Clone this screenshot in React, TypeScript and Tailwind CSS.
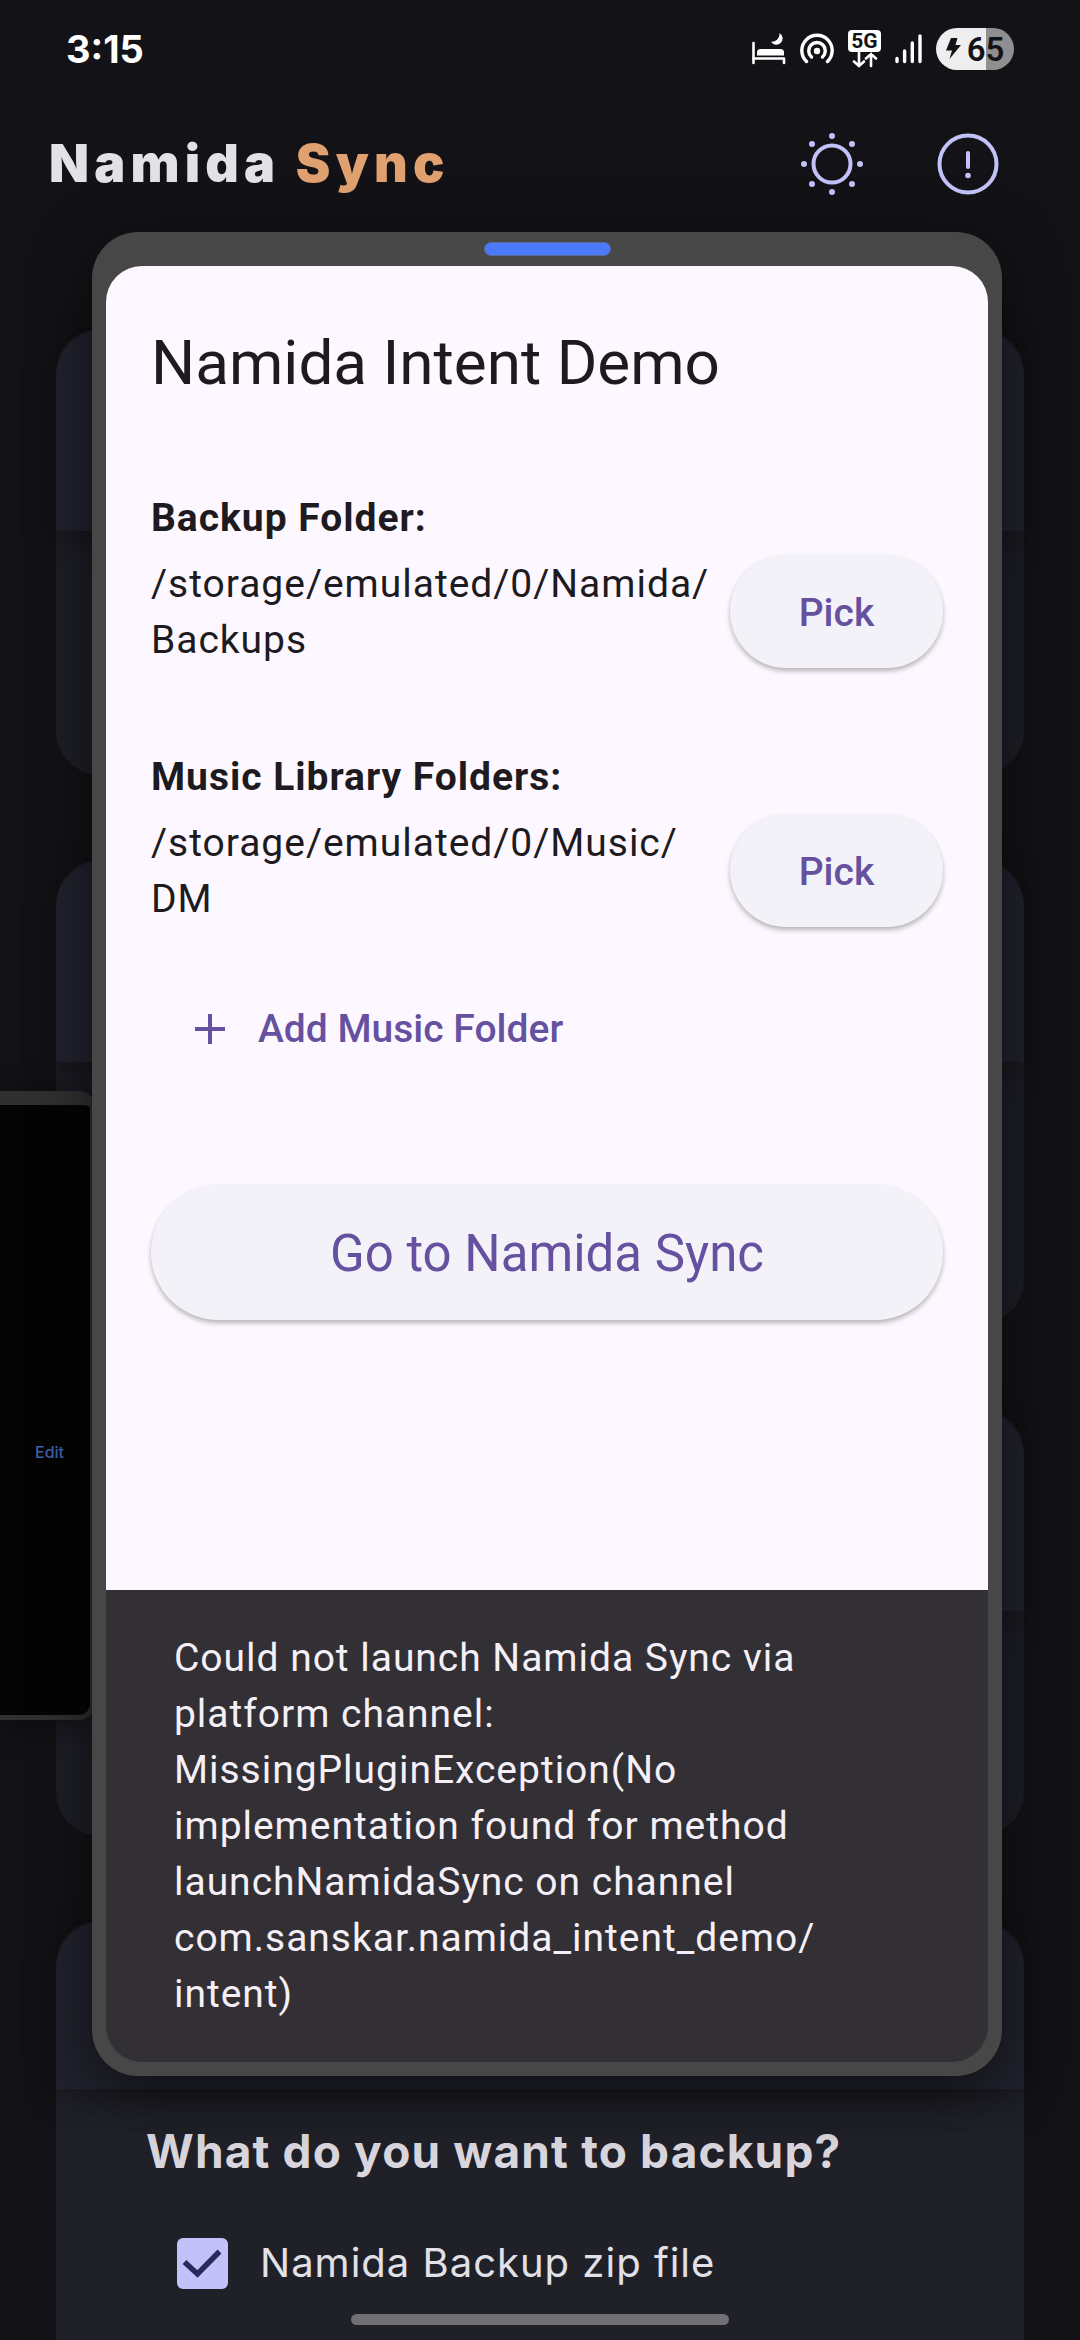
import { useState } from "react";

function BedIcon() {
  return (
    <svg width="34" height="32" viewBox="1 0 34 32" aria-hidden="true">
      <path d="M2.500 10V30" stroke="#fff" strokeWidth="2.600" strokeLinecap="round" />
      <path d="M2.500 25.500H33V30" stroke="#fff" strokeWidth="2.600" strokeLinecap="round" strokeLinejoin="round" fill="none" />
      <path d="M6 22.500V19.500Q6 16 9.500 16H29.500Q33 16 33 19.500V22.500Z" fill="#fff" />
      <path d="M28.500 0A6.300 6.300 0 1 1 20 8.800A8 8 0 0 0 28.500 0Z" fill="#fff" />
    </svg>
  );
}

function HotspotIcon() {
  return (
    <svg width="34" height="32" viewBox="1 0 34 32" fill="none" stroke="#fff" strokeWidth="3.400" strokeLinecap="round" aria-hidden="true">
      <path d="M7.500 28.500A15.200 15.200 0 1 1 28.500 28.500" />
      <path d="M12.500 24A8.300 8.300 0 1 1 23.500 24" />
      <circle cx="18" cy="18" r="3.200" fill="#fff" stroke="none" />
    </svg>
  );
}

function DataIcon() {
  return (
    <div className="flex w-[33px] flex-col items-center">
      <span className="flex h-[22px] w-full items-center justify-center rounded-[4px] bg-white font-['Roboto',sans-serif] text-[21px] font-bold leading-none text-[#131317]">
        5G
      </span>
      <svg width="28" height="16" viewBox="0 0 28 16" fill="none" stroke="#fff" strokeWidth="2.600" strokeLinecap="round" aria-hidden="true">
        <path d="M8 1V14M3 9.500L8 14L13 9.500M20 14V2M15 6.500L20 2L25 6.500" />
      </svg>
    </div>
  );
}

function SignalIcon() {
  return (
    <svg width="27" height="30" viewBox="0 0 27 30" stroke="#fff" strokeWidth="3.400" strokeLinecap="round" aria-hidden="true">
      <path d="M2 24.500V27.500M9.600 17V27.500M17.300 9V27.500M25 2V27.500" />
    </svg>
  );
}

function Battery() {
  return (
    <div className="flex h-[42px] w-[78px] items-center justify-center gap-[6px] rounded-full bg-linear-to-r from-[#eeeeee] from-64% to-[#8f8f90] to-64% text-[#131317]">
      <svg width="15" height="22" viewBox="0 0 15 22" fill="#131317" aria-hidden="true">
        <path d="M5 0H11.500L9.500 7H15L3.500 21L6 12.500H0Z" />
      </svg>
      <span className="font-['Roboto',sans-serif] text-[33px] font-semibold leading-none">65</span>
    </div>
  );
}

function SunIcon() {
  return (
    <svg width="64" height="64" viewBox="0 0 64 64" aria-hidden="true">
      <circle cx="32" cy="32" r="18.500" fill="none" stroke="#c2c1fa" strokeWidth="4" />
      <g fill="#c2c1fa">
        <circle cx="32" cy="4" r="3" />
        <circle cx="32" cy="60" r="3" />
        <circle cx="4" cy="32" r="3" />
        <circle cx="60" cy="32" r="3" />
        <circle cx="12" cy="12" r="3" />
        <circle cx="52" cy="12" r="3" />
        <circle cx="12" cy="52" r="3" />
        <circle cx="52" cy="52" r="3" />
      </g>
    </svg>
  );
}

function AlertIcon() {
  return (
    <svg width="64" height="64" viewBox="0 0 64 64" aria-hidden="true">
      <circle cx="32" cy="32" r="28.500" fill="none" stroke="#c2c1fa" strokeWidth="4" />
      <path d="M32 21V35" stroke="#c2c1fa" strokeWidth="4" strokeLinecap="round" />
      <circle cx="32" cy="43.500" r="2.800" fill="#c2c1fa" />
    </svg>
  );
}

function CardHeader({ height }: { height: string }) {
  return <div className={`${height} rounded-t-[48px] bg-[#22222e] shadow-[0_6px_32px_rgba(0,0,0,0.35)]`} />;
}

function PickRow({ label, path }: { label: string; path: string[] }) {
  return (
    <section>
      <h2 className="text-[39px] font-bold leading-[56px] tracking-wide">{label}</h2>
      <div className="mt-[8px] flex items-center gap-5">
        <p className="flex-1 pt-[2px] text-[39px] leading-[56px] tracking-wide">
          {path[0]}
          <wbr />
          {path[1]}
        </p>
        <button className="h-[113px] w-[213px] shrink-0 rounded-full bg-[#f4f2f9] pt-[4px] text-[39px] font-medium text-[#65519f] shadow-[0_3px_5px_rgba(0,0,0,0.28)]">
          Pick
        </button>
      </div>
    </section>
  );
}

export default function App() {
  const [checked, setChecked] = useState(true);
  return (
    <div className="relative flex min-h-screen flex-col overflow-hidden bg-[#131317] font-['Inter',sans-serif]">
      <div className="flex h-[98px] items-center justify-between px-[66px] text-white">
        <time className="text-[38px] font-bold leading-none">3:15</time>
        <div className="flex items-center gap-[14px]">
          <BedIcon />
          <HotspotIcon />
          <DataIcon />
          <SignalIcon />
          <Battery />
        </div>
      </div>

      <header className="flex h-[132px] items-center justify-between pl-[49px] pr-[80px]">
        <h1 className="text-[52px] font-black leading-none tracking-widest text-[#e2e1e8]">
          Namida <span className="text-[#e0a070]">Sync</span>
        </h1>
        <div className="flex gap-[72px]">
          <button aria-label="Toggle theme"><SunIcon /></button>
          <button aria-label="About"><AlertIcon /></button>
        </div>
      </header>

      <main className="mt-[99px] flex flex-1 flex-col gap-[85px] px-[56px]">
        <div className="h-[446px] rounded-[44px] bg-[#1e1e27]"><CardHeader height="h-[202px]" /></div>
        <div className="h-[464px] rounded-[44px] bg-[#1e1e27]"><CardHeader height="h-[202px]" /></div>
        <div className="h-[427px] rounded-[44px] bg-[#1e1e27]"><CardHeader height="h-[202px]" /></div>
        <div className="flex-1 rounded-t-[44px] bg-[#202029]">
          <CardHeader height="h-[168px]" />
          <div className="px-[90px] pt-[34px]">
            <h2 className="text-[46px] font-bold leading-[56px] tracking-wide text-[#d9d7dd]">What do you want to backup?</h2>
            <label className="mt-[56px] flex items-center gap-[32px] pl-[31px] text-[40px] leading-[56px] tracking-wide text-[#e2e1e8]">
              <span className="relative flex size-[51px]">
                <input
                  type="checkbox"
                  checked={checked}
                  onChange={(e) => setChecked(e.target.checked)}
                  className="size-[51px] appearance-none rounded-[6px] bg-[#c2c1fa]"
                />
                {checked && (
                  <svg className="pointer-events-none absolute inset-0" viewBox="0 0 51 51" fill="none" stroke="#29295c" strokeWidth="5.500" aria-hidden="true">
                    <path d="M7.500 24L20.500 36L42.500 13.500" />
                  </svg>
                )}
              </span>
              Namida Backup zip file
            </label>
          </div>
        </div>
      </main>

      <aside className="absolute left-0 top-[1091px] flex h-[629px] w-[95px] items-center rounded-r-[16px] border-b-[5px] border-r-[5px] border-t-[14px] border-[#303030] bg-[#040404] pl-[35px] pt-[84px] shadow-[0_4px_30px_rgba(0,0,0,0.5)]">
        <button className="text-[16px] font-medium text-[#4562a8]">Edit</button>
      </aside>

      <div
        role="dialog"
        aria-label="Namida Intent Demo"
        className="absolute bottom-[264px] left-[92px] right-[78px] top-[232px] flex flex-col rounded-[46px] bg-[#474748] px-[14px] pb-[14px] font-['Roboto',sans-serif] text-[#1d1b20] shadow-[0_14px_60px_rgba(0,0,0,0.6)]"
      >
        <div className="flex h-[34px] shrink-0 items-center justify-center">
          <div className="h-[14px] w-[127px] rounded-[7px] border border-[#5a6a9a] bg-[#4a7af8]" />
        </div>
        <div className="flex flex-1 flex-col">
          <div className="flex flex-1 flex-col rounded-t-[36px] bg-[#fdf8ff] px-[45px] pt-[57px]">
            <h1 className="text-[62px] leading-[80px]">Namida Intent Demo</h1>
            <div className="mt-[87px] flex flex-col gap-[81px]">
              <PickRow label="Backup Folder:" path={["/storage/emulated/0/Namida/", "Backups"]} />
              <PickRow label="Music Library Folders:" path={["/storage/emulated/0/Music/", "DM"]} />
            </div>
            <button className="mt-[74px] flex items-center gap-[33px] self-start pl-[44px] text-[39px] font-medium leading-[56px] text-[#65519f]">
              <svg width="30" height="30" viewBox="0 0 30 30" stroke="#65519f" strokeWidth="4" aria-hidden="true">
                <path d="M15 0V30M0 15H30" />
              </svg>
              Add Music Folder
            </button>
            <button className="mt-[128px] h-[135px] rounded-full bg-[#f4f2f9] pt-[4px] text-[51px] text-[#65519f] shadow-[0_3px_5px_rgba(0,0,0,0.28)]">
              Go to Namida Sync
            </button>
          </div>
          <p role="alert" className="rounded-b-[36px] bg-[#322f35] px-[68px] py-[40px] text-[39px] leading-[56px] tracking-wide text-[#f5eff7]">
            Could not launch Namida Sync via platform channel: MissingPluginException(No implementation found for
            method launchNamidaSync on channel com.sanskar.namida_intent_demo/
            <wbr />
            intent)
          </p>
        </div>
      </div>

      <div className="absolute bottom-[15px] left-1/2 h-[11px] w-[378px] -translate-x-1/2 rounded-full bg-[#6f6f74]" />
    </div>
  );
}
